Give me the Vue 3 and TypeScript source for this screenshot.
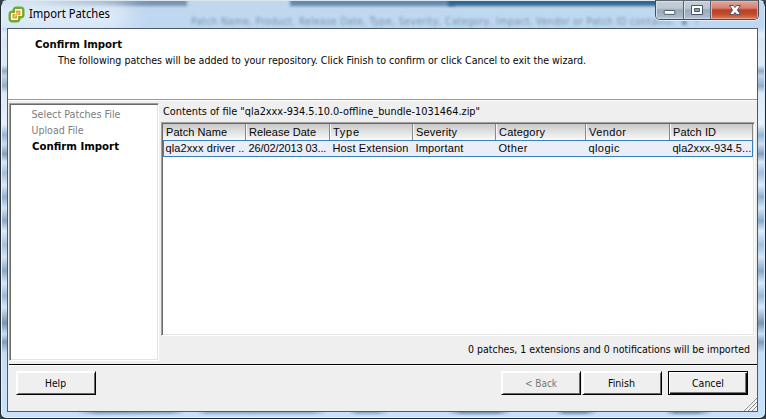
<script setup lang="ts">
interface Column { label: string; value: string; width: number; labelWidth: number; valueWidth: number }

const steps: { label: string; current: boolean; width: number }[] = [
  { label: 'Select Patches File', current: false, width: 89 },
  { label: 'Upload File', current: false, width: 52 },
  { label: 'Confirm Import', current: true, width: 87 },
]

const columns: Column[] = [
  { label: 'Patch Name', value: 'qla2xxx driver ..', width: 83, labelWidth: 61, valueWidth: 79 },
  { label: 'Release Date', value: '26/02/2013 03...', width: 84, labelWidth: 67, valueWidth: 78 },
  { label: 'Type', value: 'Host Extension', width: 83, labelWidth: 26, valueWidth: 76 },
  { label: 'Severity', value: 'Important', width: 83, labelWidth: 41, valueWidth: 48 },
  { label: 'Category', value: 'Other', width: 90, labelWidth: 46, valueWidth: 29 },
  { label: 'Vendor', value: 'qlogic', width: 84, labelWidth: 37, valueWidth: 31 },
  { label: 'Patch ID', value: 'qla2xxx-934.5...', width: 83, labelWidth: 43, valueWidth: 79 },
]
</script>

<template>
  <div class="window">
    <header class="titlebar">
      <div class="glass"><i class="shade first"></i><i class="shade second"></i><i class="shade third"></i><i class="glow"></i></div>
      <div class="ghost">Patch Name, Product, Release Date, Type, Severity, Category, Impact, Vendor or Patch ID contains:&nbsp; ▪&nbsp; ?</div>
      <svg class="app-icon" viewBox="0 0 17 17">
        <rect x="5.7" y="1.7" width="9.6" height="9.6" rx="2.5" fill="#fff" stroke="#6fac28" stroke-width="2.4" />
        <rect x="1.7" y="5.7" width="9.6" height="9.6" rx="2.5" fill="#fff" stroke="#6fac28" stroke-width="2.4" />
        <path d="M7 3.2H13.8V10H10V13.8H3.2V7H7Z" fill="#fff" />
        <path d="M8 4.5H12.5V9H9V12.5H4.5V8H8Z" fill="#e99b25" />
        <path d="M6.2 10.8L10.8 6.2" stroke="#f9cf85" stroke-width="1.6" />
      </svg>
      <svg class="title" width="84" height="20"><text x="0" y="14" textLength="81" lengthAdjust="spacingAndGlyphs">Import Patches</text></svg>
      <div class="controls">
        <span class="control min"><svg viewBox="0 0 28 18"><rect x="8.5" y="9.5" width="11" height="4" rx=".5" /></svg></span>
        <span class="control max"><svg viewBox="0 0 26 18"><path d="M7.5 4.5H18.5V13.5H7.5Z" /><path class="hole" d="M10.5 7.5H15.5V10.5H10.5Z" /></svg></span>
        <span class="control close"><svg viewBox="0 0 47 18"><path d="M18.5 4.5H22.3L24 6.5 25.7 4.5H29.5L26.4 9 29.5 13.5H25.7L24 11.5 22.3 13.5H18.5L21.6 9Z" /></svg></span>
      </div>
    </header>

    <main class="client">
      <section class="banner">
        <svg class="ui heading" width="100" height="16"><text x="0" y="12" textLength="87" lengthAdjust="spacingAndGlyphs">Confirm Import</text></svg>
        <svg class="ui description" width="540" height="16"><text x="0" y="12" textLength="528" lengthAdjust="spacingAndGlyphs">The following patches will be added to your repository. Click Finish to confirm or click Cancel to exit the wizard.</text></svg>
      </section>

      <section class="body">
        <nav class="steps sunken">
          <svg v-for="step in steps" :key="step.label" class="ui step" :class="{ current: step.current }" width="110" height="16">
            <text :x="step.current ? 0 : -0.5" y="11.5" :textLength="step.width" lengthAdjust="spacingAndGlyphs">{{ step.label }}</text>
          </svg>
        </nav>
        <div class="contents">
          <svg class="ui file" width="400" height="18"><text x="0" y="11.5" textLength="317" lengthAdjust="spacingAndGlyphs">Contents of file "qla2xxx-934.5.10.0-offline_bundle-1031464.zip"</text></svg>
          <div class="table sunken">
            <div class="row head">
              <div v-for="col in columns" :key="col.label" class="cell" :style="{ width: col.width + 'px' }">
                <svg width="82" height="14"><text x="0" y="11" :textLength="col.labelWidth">{{ col.label }}</text></svg>
              </div>
            </div>
            <div class="row selected">
              <div v-for="col in columns" :key="col.label" class="cell" :style="{ width: col.width + 'px' }">
                <svg width="82" height="14"><text x="-0.6" y="11" :textLength="col.valueWidth">{{ col.value }}</text></svg>
              </div>
            </div>
          </div>
          <svg class="ui summary" width="284" height="16"><text x="0" y="12" textLength="282" lengthAdjust="spacingAndGlyphs">0 patches, 1 extensions and 0 notifications will be imported</text></svg>
        </div>
      </section>

      <footer class="footer">
        <button class="button help"><svg class="ui" width="22" height="16"><text x="0" y="12" textLength="21" lengthAdjust="spacingAndGlyphs">Help</text></svg></button>
        <button class="button back" disabled><svg class="ui" width="33" height="16"><text x="0" y="12" textLength="32" lengthAdjust="spacingAndGlyphs">&lt; Back</text></svg></button>
        <button class="button finish"><svg class="ui" width="28" height="16"><text x="0" y="12" textLength="27" lengthAdjust="spacingAndGlyphs">Finish</text></svg></button>
        <button class="button cancel"><svg class="ui" width="33" height="16"><text x="0" y="12" textLength="32" lengthAdjust="spacingAndGlyphs">Cancel</text></svg></button>
        <svg class="grip" viewBox="0 0 14 14"><path class="light" d="M0 14L14 0M4 14L14 4M8 14L14 8" /><path d="M1 14L14 1M5 14L14 5M9 14L14 9" /></svg>
      </footer>
    </main>
    <div class="reflection"></div>
  </div>
</template>

<style>
body { background: #34424c; overflow: hidden; }
</style>

<style scoped>
* { box-sizing: border-box; }
svg { display: block; flex: none; overflow: visible; }
.window {
  width: 766px;
  height: 419px;
  padding: 0 7px 0 6px;
  border: 1px solid #20272f;
  border-top-color: #dce7ef;
  border-radius: 7px 7px 6px 6px;
  box-shadow: inset 1px 0 #e2f2ff, inset -1px 0 #d6eaff, inset 0 -1px #e2f1ff;
  background: linear-gradient(180deg, #c4dbf2 0, #c4dcf5 28px, #e5eef8 33px, #d8e6f5 39px, #dfebf7 64px, #92aac3 70px, #c0d4e8 75px, #94adc6 85px, #dce9f7 92px, #e7f1fc 123px, #96b5d4 134px, #c8def5 143px, #849fba 153px, #d7e8fa 161px, #a3bfdb 172px, #dceafa 184px, #90b0cf 196px, #d2e5f8 207px, #8aa9c8 220px, #dcecfa 230px, #a3c1df 244px, #d4e6f7 256px, #89a8c6 270px, #d6e9fc 282px, #9bb9d7 295px, #d5e8fb 306px, #7794b0 322px, #c7e0f8 333px, #7f9db8 341px, #c4def7 352px, #c9e2fc 419px);
}
.titlebar { position: relative; display: flex; align-items: flex-start; height: 27px; }
.glass {
  position: absolute;
  inset: 0 -6px 0 -5px;
  overflow: hidden;
  background: linear-gradient(180deg, #c1d7ec, #bed8f3);
  border-radius: 6px 6px 0 0;
}
.shade { position: absolute; top: -5px; height: 10px; filter: blur(1.8px); }
.first { left: 30px; width: 155px; background: linear-gradient(90deg, #8fa7c000, #7893b2 80px); }
.second { left: 288px; width: 165px; background: #6388ae; }
.third { left: 446px; width: 215px; background: #306791; }
.glow { position: absolute; left: -20px; top: 2px; width: 145px; height: 26px; background: #eaf2fa; filter: blur(12px); }
.ghost {
  position: absolute;
  left: 184px;
  top: 15px;
  width: 550px;
  height: 12px;
  white-space: nowrap;
  color: #526d88;
  font: 10px/12px "DejaVu Sans Condensed", sans-serif;
  letter-spacing: .4px;
  filter: blur(1.4px);
  opacity: .65;
}
.app-icon { position: relative; width: 17px; height: 17px; margin: 5px 0 0 1px; }
.title { position: relative; margin: 3px 0 0 4px; font: 12px "Noto Sans", "Open Sans", sans-serif; }
.controls {
  position: absolute;
  right: -1px;
  top: -1px;
  display: flex;
  width: 104px;
  height: 20px;
  border: 1px solid #414c59;
  border-top-color: #5b6570;
  border-radius: 0 0 5px 5px;
  overflow: hidden;
  box-shadow: 0 1px #e0edf9;
}
.control { box-shadow: inset 1px 1px #d7e0e9, inset 0 -1px #cad8e6; background: linear-gradient(#c5ced8 0, #bdc8d4 7px, #99aabd 9px, #a9bacc 16px, #c2d5e8); border-right: 1px solid #566372; }
.control svg { width: 100%; height: 18px; fill: #fff; stroke: #4b5666; }
.control .hole { fill: #8ba1b9; }
.min { width: 28px; }
.max { width: 27px; }
.close { width: 47px; border-right: 0; box-shadow: inset 1px 1px #e9b5a8, inset -1px -1px #e3a393; background: linear-gradient(#e3a59a 0, #d58172 7px, #b94027 9px, #c04a2c 13px, #dc7d52); }
.client { display: flex; flex-direction: column; height: 384px; border: 1px solid #505a66; background: #efefef; }
.reflection {
  height: 4px;
  background: linear-gradient(90deg, #7d9bb900 70px, #7d9bb9 90px, #8ba9c7 165px, #7d9bb900 178px, #7d9bb900 190px, #8dabca 200px, #8dabca 305px, #7d9bb900 320px, #7d9bb900 342px, #87a5c3 350px, #87a5c3 370px, #7d9bb900 382px, #7d9bb900 440px, #708ead 455px, #708ead 490px, #7d9bb900 504px, #7d9bb900 548px, #708ead 558px, #708ead 578px, #7d9bb900 590px, #7d9bb900 658px, #708ead 668px, #708ead 690px, #7d9bb900 705px);
  -webkit-mask-image: linear-gradient(#000, transparent);
  mask-image: linear-gradient(#000, transparent);
}
.banner { height: 72px; flex: none; background: linear-gradient(#efefef, #efefef) 0 70px / 1px 2px no-repeat, #fff; border-bottom: 1px solid #fff; box-shadow: inset 0 -1px #999; padding-top: 7px; }
.ui { font: 11px "DejaVu Sans Condensed", "DejaVu Sans", sans-serif; fill: #050505; }
.heading { margin-left: 27px; font-weight: bold; }
.description { margin-left: 50px; }
.body { display: flex; height: 263px; flex: none; }
.sunken { border: 1px solid; border-color: #a0a0a0 #fff #fff #a0a0a0; box-shadow: inset 1px 1px #696969, inset -1px -1px #e3e3e3; background: #fff; }
.steps { width: 150px; height: 258px; margin: 2px 0 0 1px; padding: 2px 0 0 22px; }
.step { fill: #7d7d7d; }
.step.current { fill: #000; font-weight: bold; }
.contents { display: flex; flex-direction: column; width: 594px; margin-left: 2px; }
.file { margin: 2px 0 0 2px; }
.table { width: 594px; height: 214px; margin-top: 1px; padding: 1px; }
.row { display: flex; width: 590px; font: 11px "Liberation Sans", Arial, sans-serif; fill: #050505; }
.cell { flex: none; overflow: hidden; }
.head { height: 16px; background: linear-gradient(#c9c9c9, #fafafa); }
.head .cell { padding: 1px 0 0 3px; border-right: 1px solid #888; }
.head .cell + .cell { box-shadow: inset 1px 0 #f6f6f6; }
.selected { height: 17px; border: 1px solid #3d7fbd; background: #e9eef8; }
.selected .cell { padding: 0 0 0 2px; }
.summary { margin: 5px 3px 0 auto; }
.footer { position: relative; display: flex; align-items: flex-start; flex: 1; margin-left: 1px; border-top: 1px solid #000; box-shadow: inset 0 1px #fff; padding: 6px 9px 0 7px; }
.button { display: flex; align-items: center; justify-content: center; width: 80px; height: 24px; padding: 0; border: 1px solid #fff; border-right-color: #000; border-bottom-color: #000; background: #efefef; box-shadow: inset 1px 1px #fff, inset -1px -1px #696969; }
.back { margin-left: auto; margin-right: 1px; }
.back .ui { fill: #777; }
.cancel { margin-left: 6px; border-color: #000; box-shadow: inset 1px 1px #fff, inset -1px -1px #111, inset -2px -2px #777; }
.grip { position: absolute; right: 0; bottom: 0; width: 14px; height: 14px; fill: none; stroke: #8a8a8a; }
.grip .light { stroke: #fff; }
</style>
